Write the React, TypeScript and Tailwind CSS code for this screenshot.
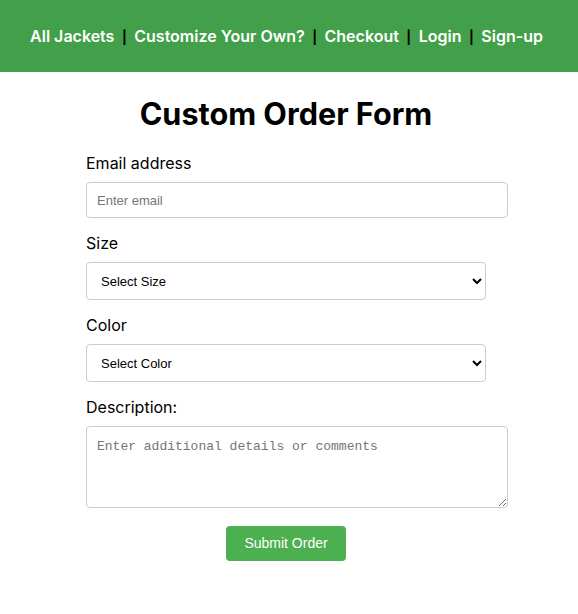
import React from 'react';

const navLinks = ['All Jackets', 'Customize Your Own?', 'Checkout', 'Login', 'Sign-up'];

const App: React.FC = () => {
  return (
    <div className="min-h-screen bg-white font-['Inter',sans-serif] text-black">
      {/* Header */}
      <header className="flex h-[72px] items-center justify-center bg-[#43a04a] pr-[5px]">
        <nav className="flex items-baseline text-[16px] font-semibold text-white">
          {navLinks.map((link, i) => (
            <React.Fragment key={link}>
              {i > 0 && <span className="mx-[7.5px] text-[13px] font-bold text-black">|</span>}
              <a href="#">{link}</a>
            </React.Fragment>
          ))}
        </nav>
      </header>

      {/* Form */}
      <div className="w-[572px]">
        <main className="mx-auto w-[400px] pt-[22px]">
          <h1 className="mb-[17px] text-center text-[30.6px] leading-[40px] font-bold">Custom Order Form</h1>

          <form className="flex flex-col">
            <div className="mb-[13px]">
              <label className="mb-[7px] block text-[16px] leading-6">Email address</label>
              <input
                type="email"
                placeholder="Enter email"
                className="h-[36px] w-[422px] rounded-[4px] border border-[#ccc] px-[10px] font-['Liberation_Sans',sans-serif] text-[13px] placeholder:text-[#757575]"
              />
            </div>

            <div className="mb-[13px]">
              <label className="mb-[7px] block text-[16px] leading-6">Size</label>
              <select className="h-[38px] w-[400px] rounded-[4px] border border-[#ccc] bg-white px-[10px] font-['Liberation_Sans',sans-serif] text-[13px]">
                <option>Select Size</option>
                <option>Small</option>
                <option>Medium</option>
                <option>Large</option>
              </select>
            </div>

            <div className="mb-[13px]">
              <label className="mb-[7px] block text-[16px] leading-6">Color</label>
              <select className="h-[38px] w-[400px] rounded-[4px] border border-[#ccc] bg-white px-[10px] font-['Liberation_Sans',sans-serif] text-[13px]">
                <option>Select Color</option>
                <option>Black</option>
                <option>Brown</option>
                <option>Green</option>
              </select>
            </div>

            <div className="mb-[18px]">
              <label className="mb-[7px] block text-[16px] leading-6">Description:</label>
              <textarea
                placeholder="Enter additional details or comments"
                className="block h-[82px] w-[422px] rounded-[4px] border border-[#ccc] px-[10px] py-[10px] font-['Liberation_Mono',monospace] text-[13px] placeholder:text-[#757575]"
              />
            </div>

            <div className="flex justify-center">
              <button
                type="button"
                className="h-[35px] w-[120px] rounded-[4px] bg-[#4caf50] font-['Liberation_Sans',sans-serif] text-[14px] text-white"
              >
                Submit Order
              </button>
            </div>
          </form>
        </main>
      </div>
    </div>
  );
};

export default App;
